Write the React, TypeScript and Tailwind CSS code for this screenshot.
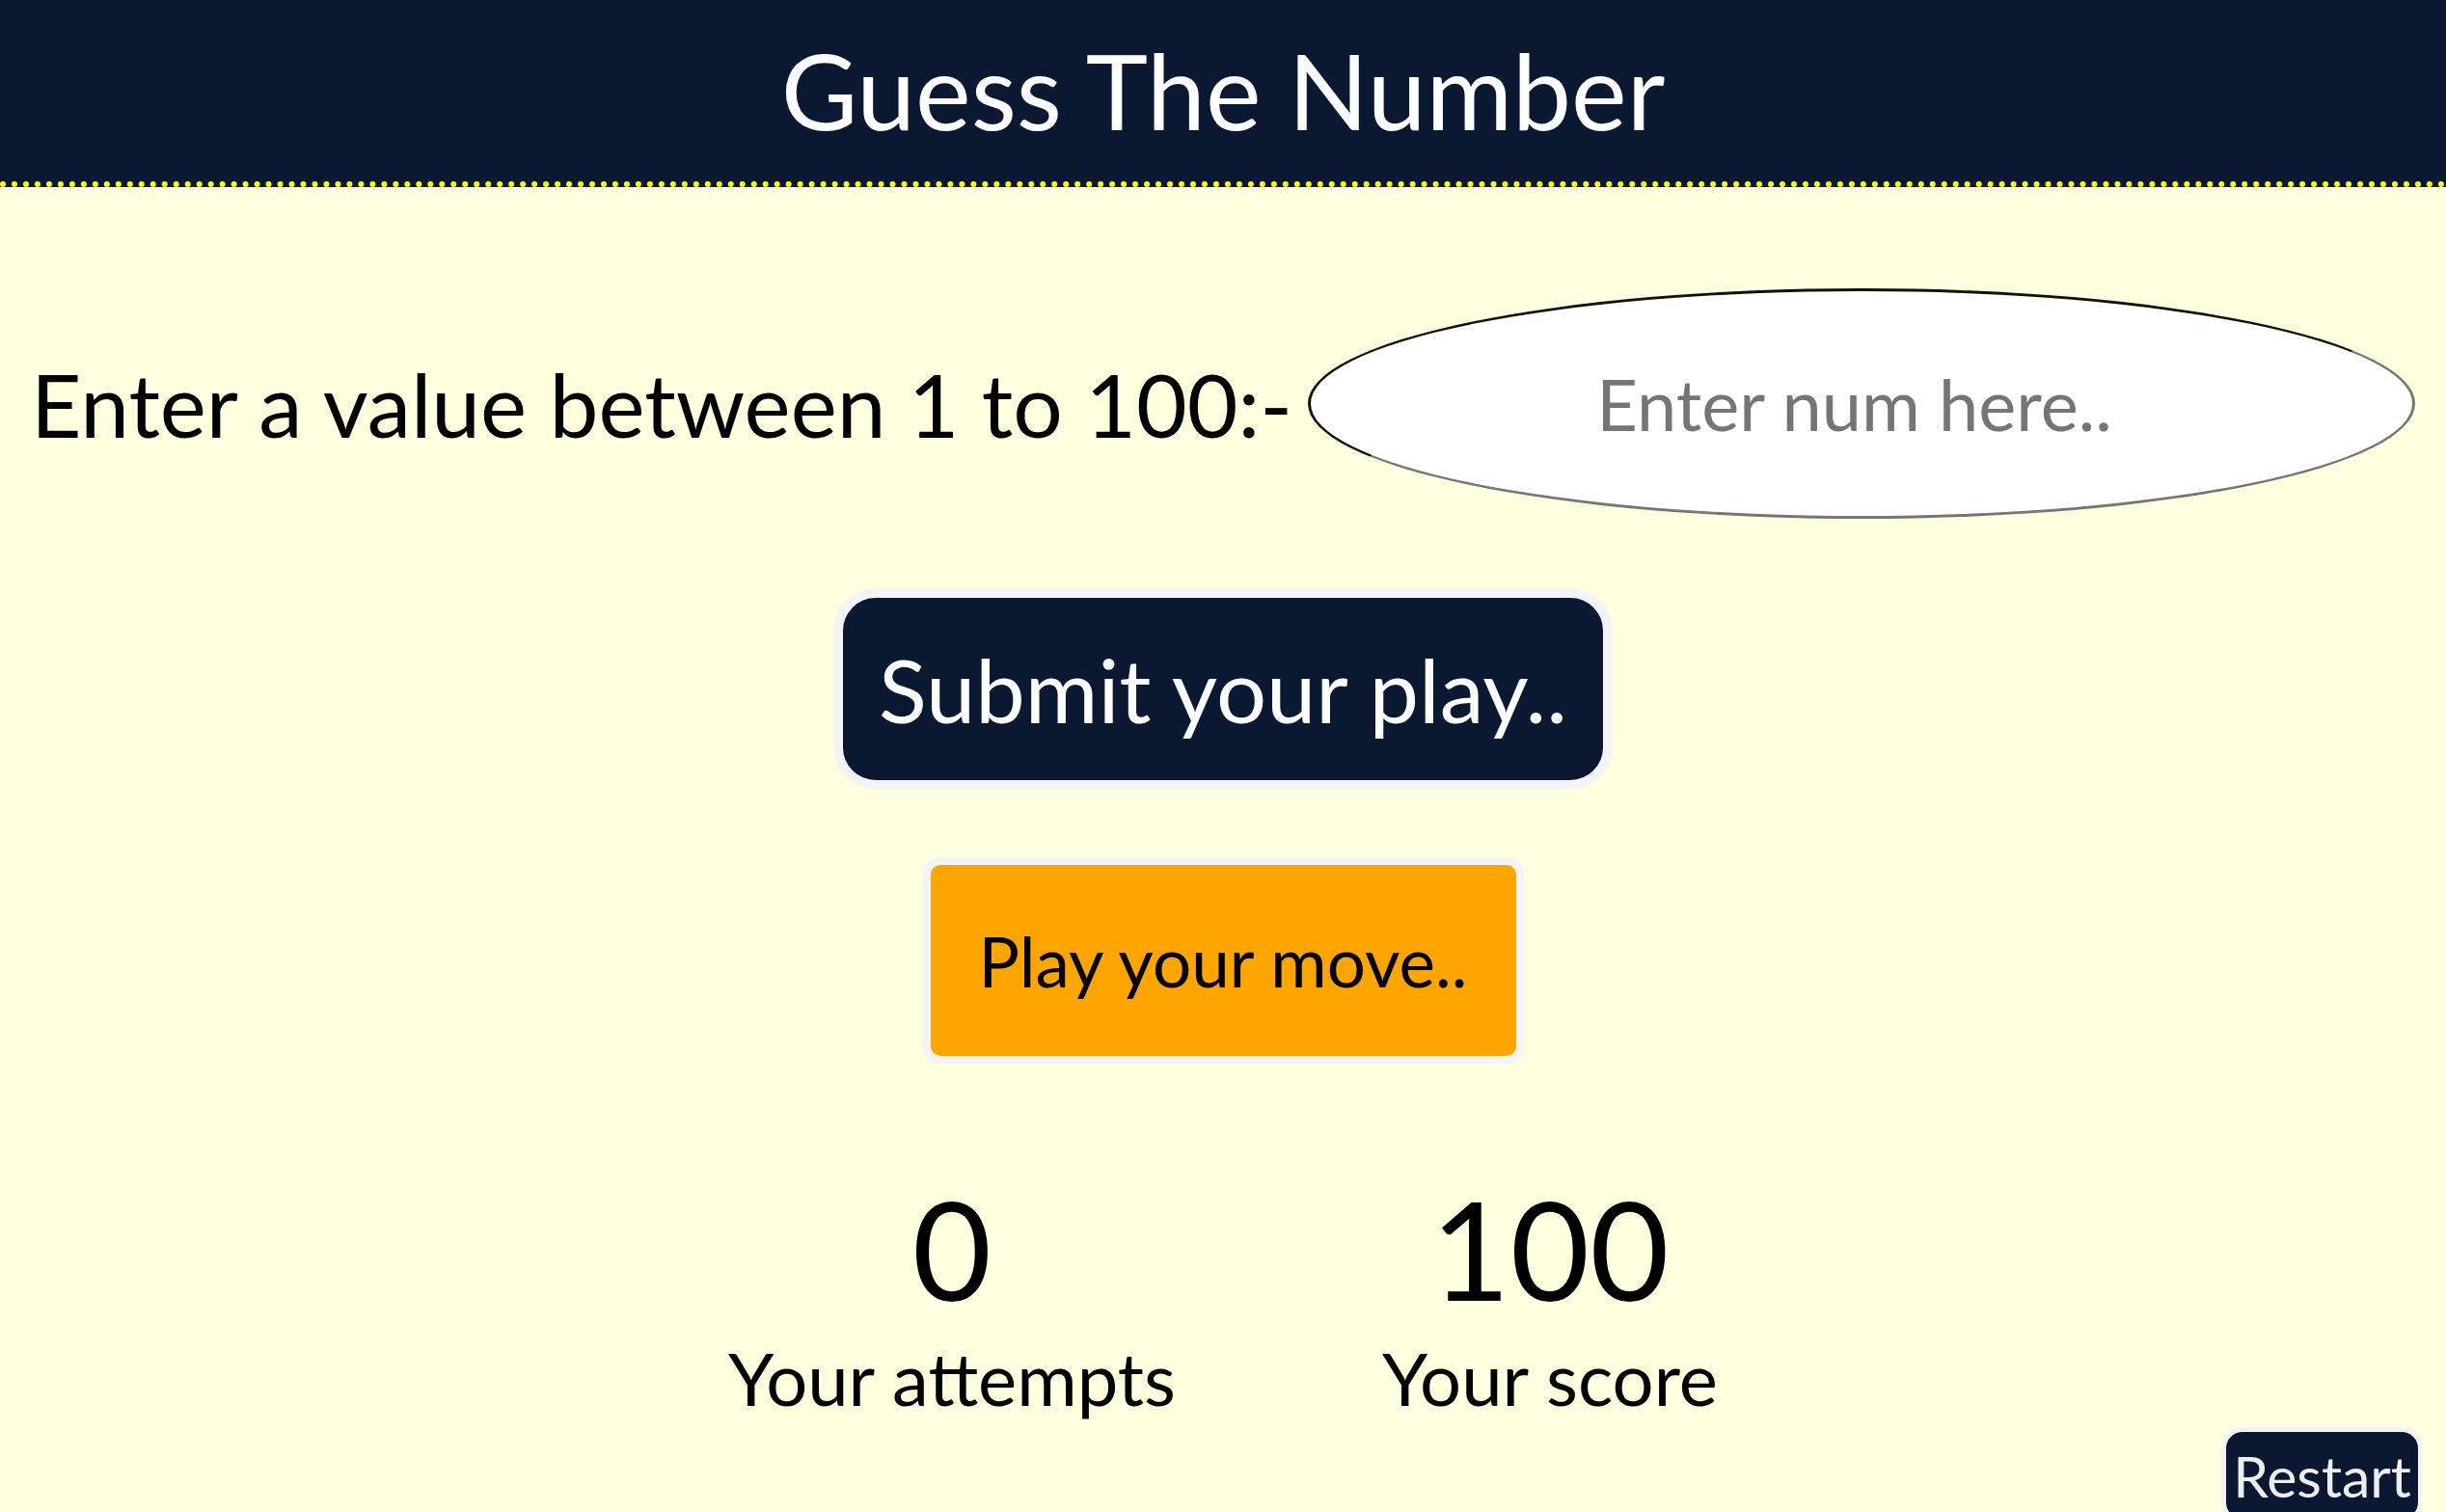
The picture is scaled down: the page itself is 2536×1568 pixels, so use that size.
import { useState } from "react"

export default function App() {
  const [guess, setGuess] = useState("")
  const [attempts, setAttempts] = useState(0)
  const [score, setScore] = useState(100)

  const submitPlay = () => {
    if (!guess) return
    setAttempts((a) => a + 1)
    setScore((s) => Math.max(0, s - 10))
  }

  const restart = () => {
    setGuess("")
    setAttempts(0)
    setScore(100)
  }

  return (
    <div className="min-h-screen bg-[#ffffe0] font-['Lato',sans-serif] text-black">
      <header className="flex h-[194px] items-center justify-center border-b-[6px] border-dotted border-[#ffff00] bg-[#0a1931]">
        <h1 className="pb-1 text-[109px] leading-none text-white">Guess The Number</h1>
      </header>

      <div className="mt-[105px] flex items-center justify-between px-[32px]">
        <label className="shrink-0 whitespace-nowrap text-[91px] leading-none">Enter a value between 1 to 100:-</label>
        <input
          type="number"
          value={guess}
          onChange={(e) => setGuess(e.target.value)}
          placeholder="Enter num here.."
          className="h-[239px] w-[1148px] shrink-0 rounded-[50%] border-[3px] border-t-[#111] border-l-[#111] border-r-[#767676] border-b-[#767676] bg-white text-center text-[74px] text-black outline-none placeholder:text-[#757575]"
        />
      </div>

      <div className="mt-[72px] flex justify-center">
        <button
          onClick={submitPlay}
          className="h-[209px] w-[808px] rounded-[44px] border-[10px] border-[#f4f4f6] bg-[#0a1931] text-[92px] leading-none text-white"
        >
          Submit your play..
        </button>
      </div>

      <div className="mt-[70px] flex justify-center">
        <button className="h-[214px] w-[623px] rounded-[18px] border-[8px] border-[#f4f4f6] bg-[#ffa500] text-[71px] leading-none text-black">
          Play your move..
        </button>
      </div>

      <div className="mt-[120px] flex justify-center gap-[214px]">
        <div className="flex flex-col items-center">
          <span className="text-[142px] leading-none">{attempts}</span>
          <span className="mt-[26px] text-[76px] leading-none">Your attempts</span>
        </div>
        <div className="flex flex-col items-center">
          <span className="text-[142px] leading-none">{score}</span>
          <span className="mt-[26px] text-[76px] leading-none">Your score</span>
        </div>
      </div>

      <div className="flex justify-end pr-[24px]">
        <button
          onClick={restart}
          className="mt-[13px] h-[100px] rounded-[22px] border-[5px] border-[#f4f4f6] bg-[#0a1931] px-[7px] text-[59px] leading-none text-[#eeeeee]"
        >
          Restart
        </button>
      </div>
    </div>
  )
}
